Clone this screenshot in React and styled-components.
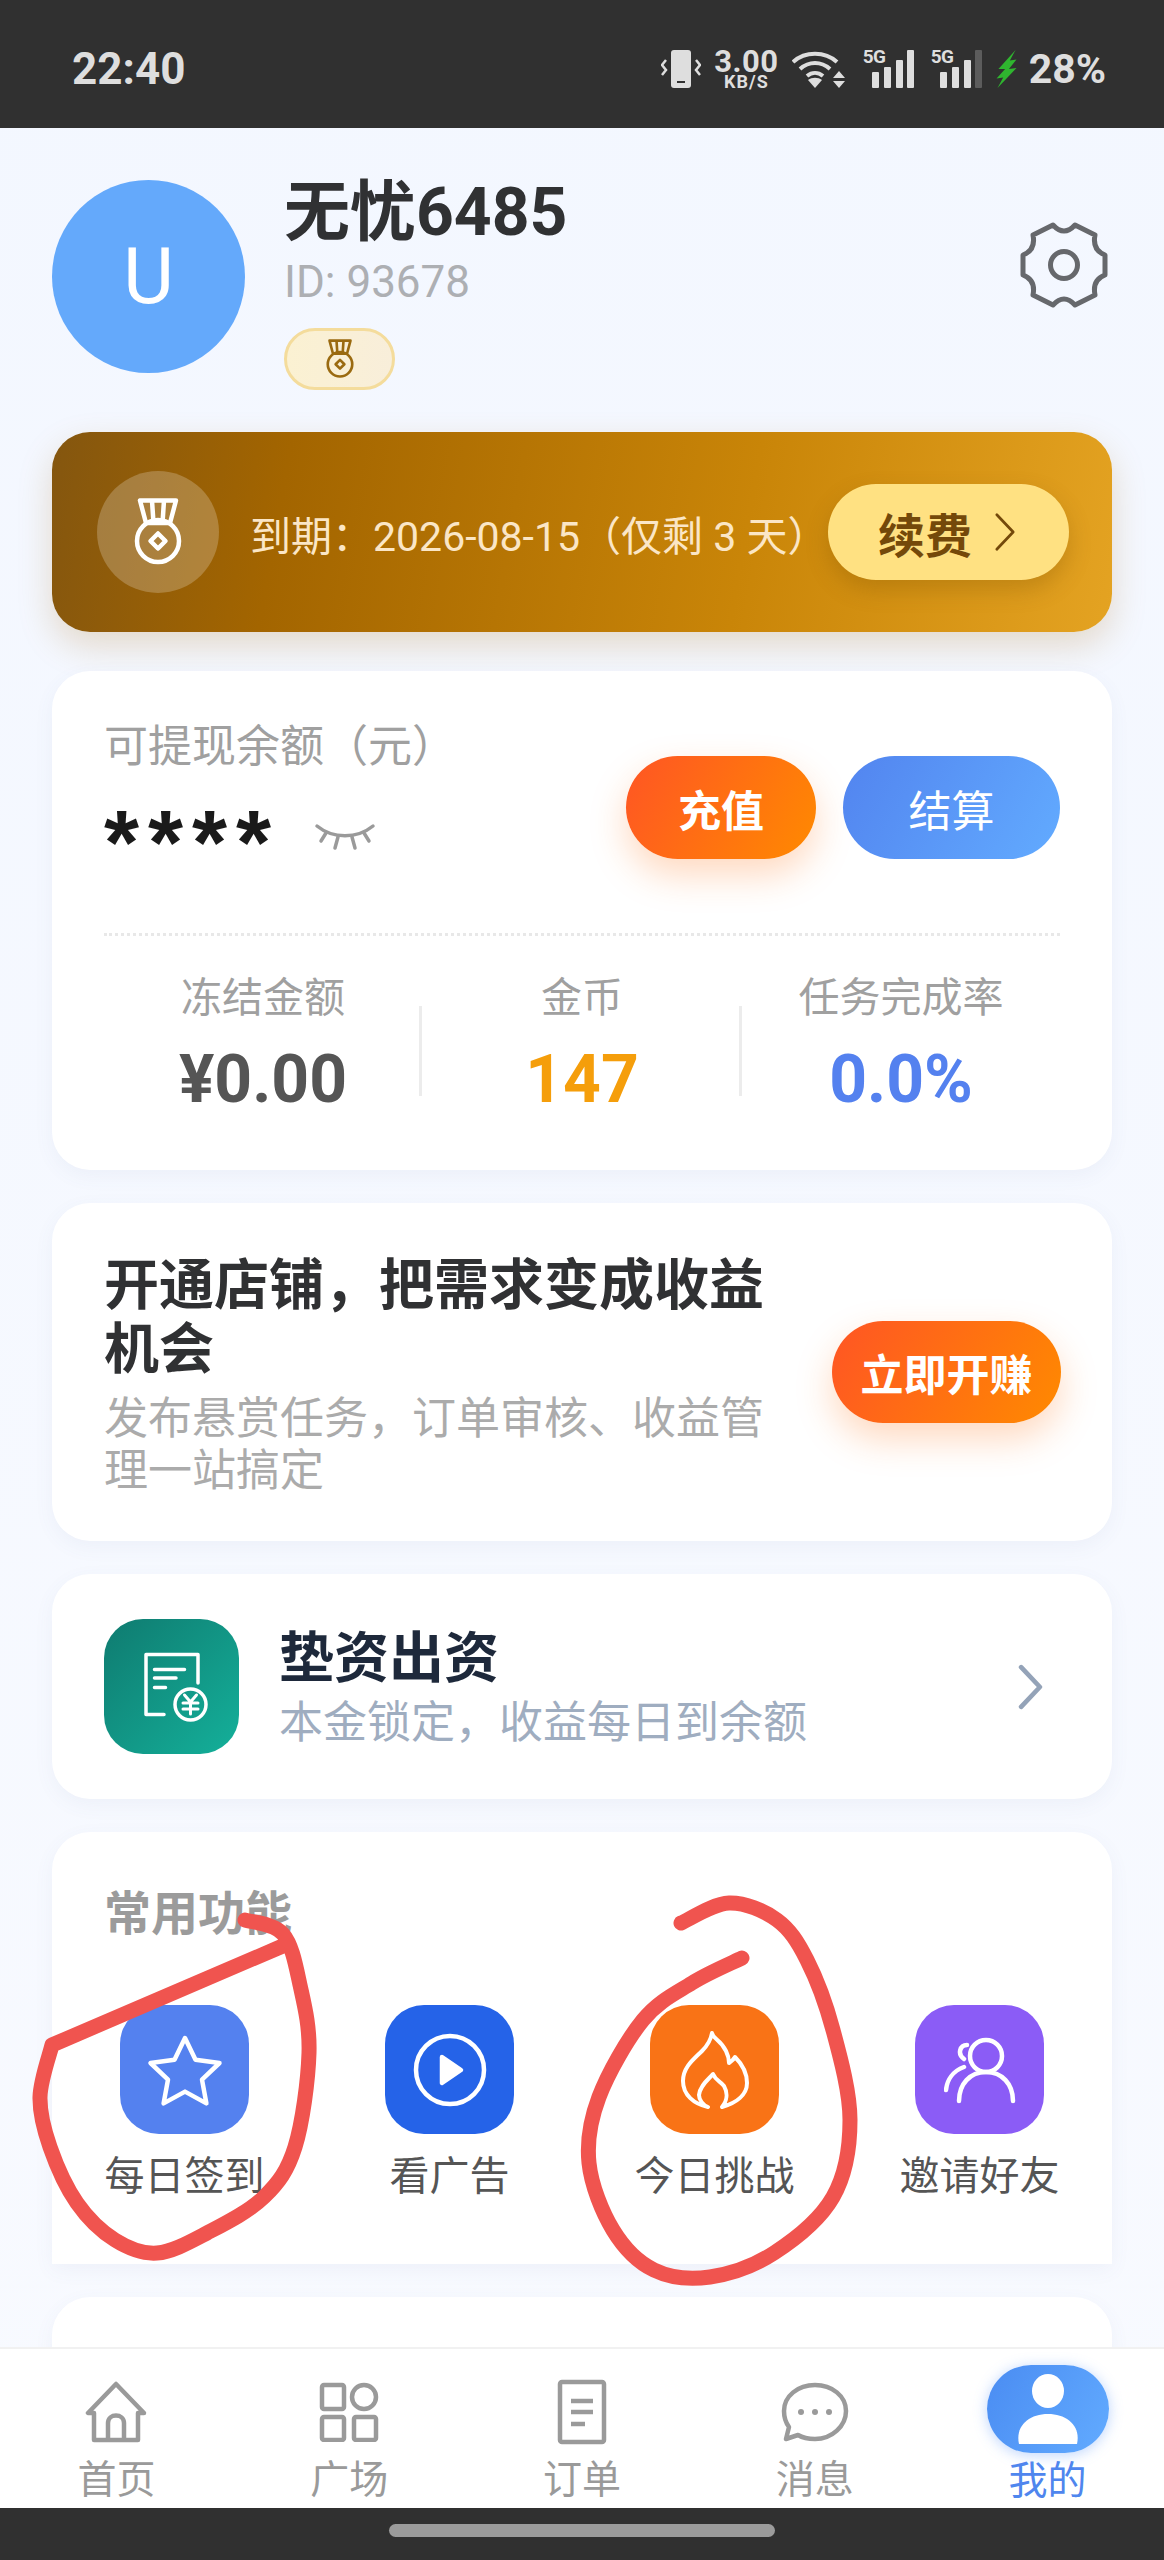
import React from "react";
import styled, { createGlobalStyle } from "styled-components";

const GlobalStyle = createGlobalStyle`
  html, body {
    margin: 0;
    padding: 0;
    background: #303030;
  }
  * {
    box-sizing: border-box;
  }
`;

const FONT = `Roboto, "Noto Sans CJK SC", sans-serif`;

const Screen = styled.div`
  position: relative;
  width: 1164px;
  height: 2560px;
  display: flex;
  flex-direction: column;
  overflow: hidden;
  font-family: ${FONT};
  background: linear-gradient(180deg, #f3f7ff 0%, #f8faff 100%);
`;

const StatusBar = styled.div`
  height: 128px;
  flex: none;
  background: #303030;
  color: #dedede;
  display: flex;
  align-items: center;
  justify-content: space-between;
  padding: 10px 58px 0 72px;
`;

const Time = styled.div`
  font-size: 44px;
  font-weight: 700;
`;

const StatusIcons = styled.div`
  display: flex;
  align-items: center;
  gap: 13px;
`;

const Speed = styled.div`
  display: flex;
  flex-direction: column;
  align-items: center;
  font-weight: 700;
  font-size: 31px;
  line-height: 25px;
  letter-spacing: 0.5px;

  span {
    font-size: 18px;
    line-height: 15px;
    letter-spacing: 1px;
  }
`;

const Signal = styled.div`
  position: relative;
  width: 51px;
  height: 38px;
  margin-left: 4px;
  display: flex;
`;

const SignalLabel = styled.span`
  position: absolute;
  left: 0;
  top: -3px;
  font-size: 19px;
  line-height: 20px;
  font-weight: 700;
  letter-spacing: -0.5px;
`;

const Battery = styled.div`
  font-size: 41px;
  font-weight: 700;
  margin-left: -3px;
`;

const Content = styled.div`
  flex: 1;
  min-height: 0;
  overflow: hidden;
  padding: 52px 52px 0;
  display: flex;
  flex-direction: column;
`;

const Header = styled.div`
  display: flex;
  align-items: flex-start;
  height: 252px;
  flex: none;
`;

const Avatar = styled.div`
  width: 193px;
  height: 193px;
  border-radius: 50%;
  background: #64a9fb;
  color: #fff;
  font-size: 78px;
  display: flex;
  align-items: center;
  justify-content: center;
  flex: none;
`;

const Profile = styled.div`
  margin-left: 39px;
  flex: 1;
  display: flex;
  flex-direction: column;
  align-items: flex-start;
`;

const Name = styled.div`
  font-size: 66px;
  line-height: 66px;
  font-weight: 700;
  color: #303133;
`;

const UserId = styled.div`
  font-size: 44px;
  line-height: 50px;
  color: #adafb3;
  margin-top: 11px;
`;

const Badge = styled.div`
  width: 111px;
  height: 62px;
  margin-top: 21px;
  border-radius: 31px;
  background: linear-gradient(90deg, #fbf1d2, #f8eeda);
  border: 3px solid #f4dc9c;
  color: #9a6a10;
  display: flex;
  align-items: center;
  justify-content: center;
`;

const GearButton = styled.div`
  margin-top: 40px;
  margin-right: 3px;
  display: flex;
`;

const Banner = styled.div`
  height: 200px;
  flex: none;
  border-radius: 38px;
  background: linear-gradient(100deg, #84560f 0%, #a36500 22%, #c98508 65%, #e4a322 100%);
  box-shadow: 0 14px 34px rgba(170, 110, 20, 0.22);
  display: flex;
  align-items: center;
  padding: 0 45px;
`;

const MedalCircle = styled.div`
  width: 122px;
  height: 122px;
  border-radius: 50%;
  background: rgba(255, 255, 255, 0.22);
  color: #fff;
  display: flex;
  align-items: center;
  justify-content: center;
  flex: none;
`;

const Expiry = styled.div`
  margin-left: 31px;
  flex: 1;
  font-size: 41px;
  white-space: nowrap;
  color: #fbe6c6;
  padding-top: 2px;
`;

const RenewButton = styled.div`
  width: 241px;
  height: 96px;
  border-radius: 48px;
  background: #ffe182;
  color: #74490a;
  font-size: 47px;
  font-weight: 700;
  display: flex;
  align-items: center;
  justify-content: center;
  gap: 22px;
  padding-right: 4px;
  box-shadow: 0 10px 22px rgba(110, 70, 0, 0.25);
  flex: none;
`;

const Card = styled.div`
  flex: none;
  height: ${({ $h }) => $h}px;
  margin-top: ${({ $gap }) => $gap}px;
  background: #fff;
  border-radius: ${({ $square }) => ($square ? "38px 38px 0 0" : "38px")};
  box-shadow: 0 6px 20px rgba(90, 110, 150, 0.06);
`;

const BalanceTop = styled.div`
  height: 265px;
  margin: 0 52px;
  border-bottom: 3px dotted #e8e8e8;
  display: flex;
  justify-content: space-between;
`;

const BalanceLabel = styled.div`
  font-size: 44px;
  line-height: 52px;
  color: #a0a0a0;
  margin-top: 50px;
`;

const BalanceRow = styled.div`
  display: flex;
  align-items: center;
  gap: 34px;
  margin-top: 18px;
`;

const Stars = styled.div`
  font-family: "Liberation Sans", sans-serif;
  font-size: 90px;
  font-weight: 700;
  line-height: 104px;
  height: 70px;
  letter-spacing: 9px;
  color: #1a1a1a;
`;

const EyeIcon = styled.svg`
  margin-top: 20px;
`;

const Actions = styled.div`
  display: flex;
  gap: 27px;
  margin-top: 85px;
`;

const PillButton = styled.div`
  width: ${({ $w }) => $w}px;
  height: ${({ $large }) => ($large ? 102 : 103)}px;
  border-radius: 52px;
  color: #fff;
  font-size: 43px;
  font-weight: ${({ $blue }) => ($blue ? 400 : 700)};
  display: flex;
  align-items: center;
  justify-content: center;
  flex: none;
  background: ${({ $blue }) =>
    $blue
      ? "linear-gradient(120deg, #5284ef, #62abff)"
      : "linear-gradient(120deg, #ff5524, #ff8a00)"};
  box-shadow: ${({ $blue }) =>
    $blue ? "none" : "0 16px 36px rgba(255, 120, 30, 0.28)"};
`;

const Stats = styled.div`
  display: grid;
  grid-template-columns: 318px 320px 1fr;
  margin: 0 52px;
  padding-top: 36px;
`;

const Stat = styled.div`
  position: relative;
  text-align: center;

  &:not(:last-child)::after {
    content: "";
    position: absolute;
    right: 0;
    top: 34px;
    width: 3px;
    height: 90px;
    background: #ececec;
  }
`;

const StatLabel = styled.div`
  font-size: 41px;
  line-height: 52px;
  color: #a0a0a0;
`;

const StatValue = styled.div`
  font-size: 66px;
  line-height: 76px;
  font-weight: 700;
  margin-top: 18px;
  color: ${({ $color }) => $color};
`;

const ShopRow = styled.div`
  height: 100%;
  padding: 0 51px 0 52px;
  display: flex;
  align-items: center;
  justify-content: space-between;
`;

const ShopText = styled.div`
  width: 670px;
  padding-top: 6px;
`;

const ShopTitle = styled.div`
  font-size: 55px;
  line-height: 64px;
  font-weight: 700;
  color: #303133;
`;

const ShopSub = styled.div`
  font-size: 44px;
  line-height: 52px;
  color: #ababab;
  margin-top: 12px;
`;

const FundRow = styled.div`
  height: 100%;
  padding: 0 69px 0 52px;
  display: flex;
  align-items: center;
`;

const FundIcon = styled.div`
  width: 135px;
  height: 135px;
  border-radius: 39px;
  background: linear-gradient(135deg, #0f7b70, #14b09a);
  color: #fff;
  display: flex;
  align-items: center;
  justify-content: center;
  flex: none;
`;

const FundText = styled.div`
  flex: 1;
  margin-left: 40px;
  padding-top: 5px;
`;

const FundTitle = styled.div`
  font-size: 55px;
  line-height: 62px;
  font-weight: 700;
  color: #1e293b;
`;

const FundSub = styled.div`
  font-size: 44px;
  line-height: 56px;
  color: #9fadc0;
  margin-top: 6px;
`;

const SectionTitle = styled.div`
  font-size: 47px;
  line-height: 54px;
  font-weight: 700;
  color: #9b9b9b;
  padding: 55px 0 0 52px;
`;

const FeatureGrid = styled.div`
  display: grid;
  grid-template-columns: repeat(4, 1fr);
  margin-top: 64px;
`;

const Feature = styled.div`
  display: flex;
  flex-direction: column;
  align-items: center;
`;

const FeatureIcon = styled.div`
  width: 129px;
  height: 129px;
  border-radius: 39px;
  background: ${({ $bg }) => $bg};
  color: #fff;
  display: flex;
  align-items: center;
  justify-content: center;
`;

const FeatureLabel = styled.div`
  font-size: 40px;
  line-height: 50px;
  margin-top: 18px;
  color: #555;
`;

const TabBar = styled.div`
  height: 161px;
  flex: none;
  background: #fff;
  border-top: 2px solid #f1f1f1;
  display: grid;
  grid-template-columns: repeat(5, 1fr);
  position: relative;
`;

const Tab = styled.div`
  display: flex;
  flex-direction: column;
  align-items: center;
  color: ${({ $active }) => ($active ? "#4f86ee" : "#9a9a9a")};
`;

const TabIcon = styled.div`
  height: 107px;
  display: flex;
  align-items: center;
  justify-content: center;
  padding-top: 18px;
`;

const ActiveBlob = styled.div`
  width: 122px;
  height: 88px;
  margin-top: 16px;
  border-radius: 44px;
  background: linear-gradient(120deg, #4a8cf2, #62abff);
  box-shadow: 0 2px 14px rgba(90, 150, 250, 0.4);
  display: flex;
  align-items: center;
  justify-content: center;
  color: #fff;
`;

const TabLabel = styled.div`
  font-size: 39px;
  line-height: 48px;
  margin-top: ${({ $active }) => ($active ? 4 : 0)}px;
`;

const HomeBar = styled.div`
  height: 52px;
  flex: none;
  background: #303030;
  display: flex;
  justify-content: center;
  padding-top: 16px;
`;

const HomeIndicator = styled.div`
  width: 386px;
  height: 13px;
  border-radius: 7px;
  background: #9b9b9b;
`;

const Annotation = styled.svg`
  position: absolute;
  left: 0;
  top: 0;
  pointer-events: none;
`;

// smooth line through hand-drawn points
const smooth = (pts) => {
  let d = `M${pts[0][0]} ${pts[0][1]}`;
  for (let i = 0; i < pts.length - 1; i++) {
    const p0 = pts[i - 1] || pts[i];
    const p1 = pts[i];
    const p2 = pts[i + 1];
    const p3 = pts[i + 2] || p2;
    const c1x = p1[0] + (p2[0] - p0[0]) / 6;
    const c1y = p1[1] + (p2[1] - p0[1]) / 6;
    const c2x = p2[0] - (p3[0] - p1[0]) / 6;
    const c2y = p2[1] - (p3[1] - p1[1]) / 6;
    d += ` C${c1x} ${c1y} ${c2x} ${c2y} ${p2[0]} ${p2[1]}`;
  }
  return d;
};

const leftLoop = [
  [245, 1920], [283, 1934], [300, 1985], [309, 2053], [295, 2147], [264, 2197],
  [207, 2233], [157, 2253], [115, 2240], [77, 2203], [50, 2147], [40, 2097], [52, 2045],
];
const rightLoop = [
  [681, 1923], [729, 1903], [777, 1920], [807, 1960], [833, 2030], [850, 2120],
  [833, 2197], [774, 2253], [710, 2277], [654, 2270], [613, 2230], [589, 2163],
  [599, 2097], [643, 2020], [692, 1983], [742, 1958],
];

const Medal = ({ size }) => (
  <svg width={size} height={size} viewBox="0 0 48 48" fill="none" stroke="currentColor" strokeWidth="3" strokeLinejoin="round">
    <path d="M12 3h24l-4 15H16z" />
    <path d="M20 3l1 15M28 3l-1 15" />
    <circle cx="24" cy="30" r="14" />
    <path d="M24 25l5 5-5 5-5-5z" />
  </svg>
);

const Chevron = ({ w, h, color, sw }) => (
  <svg width={w} height={h} viewBox="0 0 24 44" fill="none" stroke={color} strokeWidth={sw} strokeLinecap="round" strokeLinejoin="round">
    <path d="M3 3l18 19-18 19" />
  </svg>
);

const Bars = ({ last }) => (
  <svg width="51" height="38" viewBox="0 0 51 38" fill="#dedede">
    <rect x="9" y="22" width="7" height="16" rx="1" />
    <rect x="21" y="17" width="7" height="21" rx="1" />
    <rect x="33" y="10" width="7" height="28" rx="1" />
    <rect x="44" y="0" width="7" height="38" rx="1" fill={last} />
  </svg>
);

const features = [
  {
    label: "每日签到",
    bg: "#5481ef",
    icon: (
      <svg width="76" height="76" viewBox="0 0 76 76" fill="none" stroke="currentColor" strokeWidth="4.5" strokeLinejoin="round">
        <path d="M38 6l10.500 21.800 24 3.200-17.500 16.600 4.400 23.800L38 59.600 16.600 71.400l4.400-23.800L3.500 31l24-3.200z" />
      </svg>
    ),
  },
  {
    label: "看广告",
    bg: "#2563e8",
    icon: (
      <svg width="76" height="76" viewBox="0 0 76 76" fill="none" stroke="currentColor" strokeWidth="4.5">
        <circle cx="38" cy="38" r="34" />
        <path d="M30 25l19 13-19 13z" fill="currentColor" strokeLinejoin="round" />
      </svg>
    ),
  },
  {
    label: "今日挑战",
    bg: "#f97316",
    icon: (
      <svg width="70" height="78" viewBox="0 0 70 78" fill="none" stroke="currentColor" strokeWidth="4" strokeLinejoin="round">
        <path d="M32 2C33 8 40 8 46 20C48 24 49 28 49 32C52 30 54 28 55 26C62 33 67 43 67 52C67 64 56 72 42 76C47 70 48 62 44 55C40 50 36 50 33 43C29 48 20 54 19 64C19 69 23 74 28 76C14 73 3 64 3 50C3 36 14 28 22 20C28 14 31 8 32 2Z" />
      </svg>
    ),
  },
  {
    label: "邀请好友",
    bg: "#8b5cf6",
    icon: (
      <svg width="72" height="68" viewBox="0 0 72 68" fill="none" stroke="currentColor" strokeWidth="4.5" strokeLinecap="round">
        <circle cx="42" cy="20" r="16" />
        <path d="M15 65c0-17 11-29 27-29s27 12 27 29" />
        <path d="M23 9c-7 0-10 9-3 14M20 31C9 35 3 44 2 54" />
      </svg>
    ),
  },
];

const tabs = [
  {
    label: "首页",
    icon: (
      <svg width="62" height="62" viewBox="0 0 62 62" fill="none" stroke="currentColor" strokeWidth="4.5" strokeLinejoin="round">
        <path d="M31 3L3 32h6v27h44V32h6z" />
        <path d="M23 59V42c0-10 16-10 16 0v17" />
      </svg>
    ),
  },
  {
    label: "广场",
    icon: (
      <svg width="60" height="60" viewBox="0 0 60 60" fill="none" stroke="currentColor" strokeWidth="4.5">
        <rect x="3" y="3" width="22" height="24" rx="2" />
        <circle cx="45" cy="15" r="12" />
        <rect x="3" y="35" width="22" height="23" rx="2" />
        <rect x="35" y="35" width="22" height="23" rx="2" />
      </svg>
    ),
  },
  {
    label: "订单",
    icon: (
      <svg width="50" height="66" viewBox="0 0 50 66" fill="none" stroke="currentColor" strokeWidth="4.5">
        <rect x="3" y="3" width="44" height="60" rx="2" />
        <path d="M14 22h22M14 33h22M14 45h14" />
      </svg>
    ),
  },
  {
    label: "消息",
    icon: (
      <svg width="68" height="60" viewBox="0 0 68 60" fill="none" stroke="currentColor" strokeWidth="4.5" strokeLinejoin="round">
        <path d="M34 3c17 0 31 11 31 26S51 57 34 57c-6 0-12-1-17-4l-12 4 3-12C5 41 3 35 3 29 3 14 17 3 34 3z" />
        <circle cx="20" cy="30" r="3" fill="currentColor" stroke="none" />
        <circle cx="34" cy="30" r="3" fill="currentColor" stroke="none" />
        <circle cx="48" cy="30" r="3" fill="currentColor" stroke="none" />
      </svg>
    ),
  },
];

const App = () => {
  return (
    <>
      <GlobalStyle />
      <Screen>
        <StatusBar>
          <Time>22:40</Time>
          <StatusIcons>
            <svg width="40" height="38" viewBox="0 0 40 38" fill="none">
              <rect x="10" y="0" width="20" height="38" rx="3" fill="#dedede" />
              <rect x="16" y="31" width="8" height="2" fill="#303030" />
              <path d="M5 10L1 15l4 5-4 5M35 10l4 5-4 5 4 5" stroke="#dedede" strokeWidth="2.5" />
            </svg>
            <Speed>
              3.00
              <span>KB/S</span>
            </Speed>
            <svg width="54" height="38" viewBox="0 0 54 38" fill="none" stroke="#dedede" strokeWidth="4">
              <path d="M1 12C13 1 33 1 45 12" />
              <path d="M8 19c9-8 21-8 30 0" />
              <path d="M15 26c5-4 11-4 16 0" />
              <path d="M23 38l-7-8c4-3 10-3 14 0z" fill="#dedede" stroke="none" />
              <path d="M47 21l6 7H41zM47 38l6-7H41z" fill="#dedede" stroke="none" />
            </svg>
            <Signal>
              <SignalLabel>5G</SignalLabel>
              <Bars last="#dedede" />
            </Signal>
            <Signal>
              <SignalLabel>5G</SignalLabel>
              <Bars last="#5c5c5c" />
            </Signal>
            <svg width="24" height="38" viewBox="0 0 24 40" fill="#2fb52f">
              <path d="M21 0L3 20h7L1 30l7-1-6 11 20-21-8 1 8-10-7 1z" />
            </svg>
            <Battery>28%</Battery>
          </StatusIcons>
        </StatusBar>

        <Content>
          <Header>
            <Avatar>U</Avatar>
            <Profile>
              <Name>无忧6485</Name>
              <UserId>ID: 93678</UserId>
              <Badge>
                <Medal size={42} />
              </Badge>
            </Profile>
            <GearButton>
              <svg width="90" height="90" viewBox="0 0 90 90" fill="none" stroke="#66686c" strokeWidth="5" strokeLinejoin="round">
                <path d="M34 5Q45 17 56 5L76 15Q73 30 86 35L86 55Q73 60 76 75L56 85Q45 73 34 85L14 75Q17 60 4 55L4 35Q17 30 14 15Z" />
                <circle cx="45" cy="45" r="13.5" />
              </svg>
            </GearButton>
          </Header>

          <Banner>
            <MedalCircle>
              <Medal size={72} />
            </MedalCircle>
            <Expiry>到期：2026-08-15（仅剩 3 天）</Expiry>
            <RenewButton>
              续费
              <Chevron w={22} h={40} color="#74490a" sw={3} />
            </RenewButton>
          </Banner>

          <Card $h={499} $gap={39}>
            <BalanceTop>
              <div>
                <BalanceLabel>可提现余额（元）</BalanceLabel>
                <BalanceRow>
                  <Stars>****</Stars>
                  <EyeIcon width="62" height="32" viewBox="0 0 62 32" fill="none" stroke="#9a9a9a" strokeWidth="3.5" strokeLinecap="round">
                    <path d="M3 6c16 13 40 13 56 0" />
                    <path d="M12 13L7 21M24 17l-3 11M38 17l3 11M50 13l5 8" />
                  </EyeIcon>
                </BalanceRow>
              </div>
              <Actions>
                <PillButton $w={190}>充值</PillButton>
                <PillButton $w={217} $blue>结算</PillButton>
              </Actions>
            </BalanceTop>
            <Stats>
              <Stat>
                <StatLabel>冻结金额</StatLabel>
                <StatValue $color="#555">¥0.00</StatValue>
              </Stat>
              <Stat>
                <StatLabel>金币</StatLabel>
                <StatValue $color="#f59e0b">147</StatValue>
              </Stat>
              <Stat>
                <StatLabel>任务完成率</StatLabel>
                <StatValue $color="#5481ef">0.0%</StatValue>
              </Stat>
            </Stats>
          </Card>

          <Card $h={338} $gap={33}>
            <ShopRow>
              <ShopText>
                <ShopTitle>开通店铺，把需求变成收益机会</ShopTitle>
                <ShopSub>发布悬赏任务，订单审核、收益管理一站搞定</ShopSub>
              </ShopText>
              <PillButton $w={229} $large>立即开赚</PillButton>
            </ShopRow>
          </Card>

          <Card $h={225} $gap={33}>
            <FundRow>
              <FundIcon>
                <svg width="72" height="72" viewBox="0 0 72 72" fill="none" stroke="currentColor" strokeWidth="3.5" strokeLinecap="round" strokeLinejoin="round">
                  <path d="M28 63.500H10V3.500h52V32" />
                  <path d="M18.500 18.500h30M18.500 27h21.500M18.500 36.500h11" />
                  <circle cx="54.500" cy="53.500" r="15.500" />
                  <path d="M48.500 44l6 7 6-7M47 52h15M47 58h15M54.500 51v12" strokeWidth="3" />
                </svg>
              </FundIcon>
              <FundText>
                <FundTitle>垫资出资</FundTitle>
                <FundSub>本金锁定，收益每日到余额</FundSub>
              </FundText>
              <Chevron w={25} h={46} color="#94a3b8" sw={4.5} />
            </FundRow>
          </Card>

          <Card $h={432} $gap={33} $square>
            <SectionTitle>常用功能</SectionTitle>
            <FeatureGrid>
              {features.map((f) => (
                <Feature key={f.label}>
                  <FeatureIcon $bg={f.bg}>{f.icon}</FeatureIcon>
                  <FeatureLabel>{f.label}</FeatureLabel>
                </Feature>
              ))}
            </FeatureGrid>
          </Card>

          <Card $h={120} $gap={33} />
        </Content>

        <TabBar>
          {tabs.map((t) => (
            <Tab key={t.label}>
              <TabIcon>{t.icon}</TabIcon>
              <TabLabel>{t.label}</TabLabel>
            </Tab>
          ))}
          <Tab $active>
            <ActiveBlob>
              <svg width="66" height="70" viewBox="0 0 66 70" fill="currentColor">
                <ellipse cx="33" cy="17" rx="16" ry="17" />
                <path d="M4 70c-4-18 10-30 29-30s33 12 29 30z" />
              </svg>
            </ActiveBlob>
            <TabLabel $active>我的</TabLabel>
          </Tab>
        </TabBar>

        <HomeBar>
          <HomeIndicator />
        </HomeBar>

        <Annotation width="1164" height="2560" viewBox="0 0 1164 2560" fill="none" stroke="#f0544f" strokeWidth="15" strokeLinecap="round" strokeLinejoin="round">
          <path d={smooth(leftLoop) + " L285 1945"} />
          <path d={smooth(rightLoop)} />
        </Annotation>
      </Screen>
    </>
  );
};

export default App;
